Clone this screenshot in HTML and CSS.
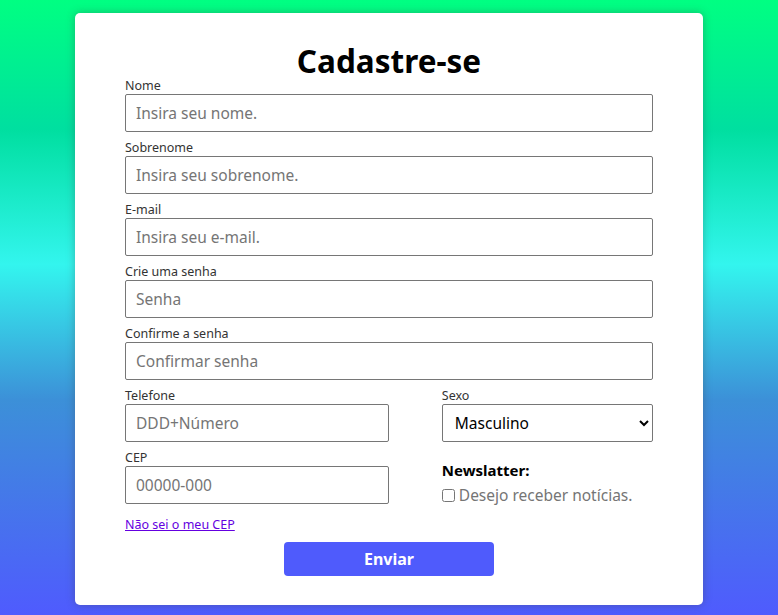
FILE: index.html
```html
<!DOCTYPE html>
<html lang="pt-BR">
<head>
<meta charset="utf-8">
<title>Cadastre-se</title>
<link rel="stylesheet" href="styles.css">
</head>
<body>
<main class="card">
  <h1 class="title">Cadastre-se</h1>
  <form class="form">
    <div class="field">
      <label class="label" for="nome">Nome</label>
      <input class="input" id="nome" type="text" placeholder="Insira seu nome.">
    </div>
    <div class="field">
      <label class="label" for="sobrenome">Sobrenome</label>
      <input class="input" id="sobrenome" type="text" placeholder="Insira seu sobrenome.">
    </div>
    <div class="field">
      <label class="label" for="email">E-mail</label>
      <input class="input" id="email" type="text" placeholder="Insira seu e-mail.">
    </div>
    <div class="field">
      <label class="label" for="senha">Crie uma senha</label>
      <input class="input" id="senha" type="text" placeholder="Senha">
    </div>
    <div class="field">
      <label class="label" for="confirma">Confirme a senha</label>
      <input class="input" id="confirma" type="text" placeholder="Confirmar senha">
    </div>
    <div class="split">
      <div class="col-left">
        <div class="field">
          <label class="label" for="tel">Telefone</label>
          <input class="input" id="tel" type="text" placeholder="DDD+Número">
        </div>
        <div class="field">
          <label class="label" for="cep">CEP</label>
          <input class="input" id="cep" type="text" placeholder="00000-000">
        </div>
      </div>
      <div class="col-right">
        <div class="field">
          <label class="label" for="sexo">Sexo</label>
          <select class="select" id="sexo">
            <option>Masculino</option>
            <option>Feminino</option>
          </select>
        </div>
        <div class="news">
          <h3 class="news-title">Newslatter:</h3>
          <label class="check"><input class="checkbox" type="checkbox"> Desejo receber notícias.</label>
        </div>
      </div>
    </div>
    <a class="link" href="#">Não sei o meu CEP</a>
    <button class="btn" type="button">Enviar</button>
  </form>
</main>
</body>
</html>
```
FILE: styles.css
```css
html, body {
  margin: 0;
  height: 100%;
}
body {
  font-family: "Noto Sans", "Open Sans", sans-serif;
  background: linear-gradient(to bottom, #00ff82 0%, #00dfa0 21%, #33f5ee 43%, #3c90d8 65%, #4f5bfe 100%);
  padding-top: 13px;
  box-sizing: border-box;
}
.card {
  width: 628px;
  height: 592px;
  margin: 0 auto;
  background: #fff;
  border-radius: 5px;
  box-shadow: 0 0 8px rgba(60, 60, 60, 0.35);
  box-sizing: border-box;
  padding: 31px 50px 0;
}
.title {
  margin: 0;
  text-align: center;
  font-size: 31.5px;
  font-weight: 700;
  line-height: 34px;
  color: #000;
}
.form {
  display: flex;
  flex-direction: column;
}
.field {
  display: flex;
  flex-direction: column;
  margin-bottom: 8px;
}
.label {
  font-size: 12.5px;
  line-height: 16px;
  color: #333;
}
.input, .select {
  height: 38px;
  box-sizing: border-box;
  border: 1px solid #767676;
  border-radius: 2px;
  font-family: inherit;
  font-size: 15.5px;
  padding: 0 10px;
  color: #000;
  background: #fff;
}
.input::placeholder {
  color: #757575;
}
.select {
  padding: 0 8px;
}
.split {
  display: flex;
  justify-content: space-between;
}
.col-left {
  width: 50%;
  display: flex;
  flex-direction: column;
}
.col-right {
  width: 40%;
  display: flex;
  flex-direction: column;
}
.news-title {
  margin: 10px 0 4px;
  font-size: 15px;
  font-weight: 700;
  line-height: 20px;
  color: #000;
}
.check {
  display: flex;
  align-items: center;
  gap: 4px;
  font-size: 15.5px;
  line-height: 22px;
  color: #757575;
}
.checkbox {
  margin: 0;
  width: 13px;
  height: 13px;
}
.link {
  align-self: flex-start;
  font-size: 12.5px;
  line-height: 17px;
  color: #6400e0;
  margin-top: 4px;
}
.btn {
  align-self: center;
  width: 210px;
  height: 34px;
  margin-top: 9px;
  border: none;
  border-radius: 4px;
  background: #4f5bfc;
  color: #fff;
  font-family: inherit;
  font-size: 16px;
  font-weight: 700;
}
```
